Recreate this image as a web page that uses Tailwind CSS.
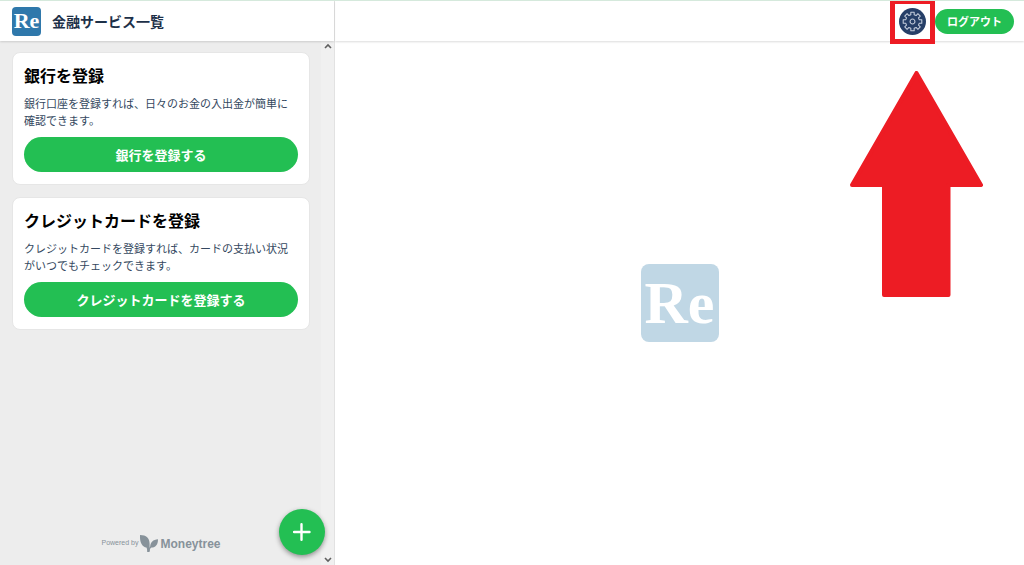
<!DOCTYPE html>
<html lang="ja">
<head>
    <meta charset="UTF-8">
    <meta name="viewport" content="width=device-width, initial-scale=1.0">
    <script src="https://cdn.jsdelivr.net/npm/@tailwindcss/browser@4"></script>
    <title>金融サービス一覧</title>
</head>
<body class="bg-white font-['Noto_Sans_CJK_JP',sans-serif] text-[#1d3048]">
    <div class="relative flex h-screen overflow-hidden border-t border-[#d5e9dc]">

        <!-- sidebar -->
        <aside class="relative flex w-[335px] shrink-0 flex-col border-r border-[#e2e2e2] bg-[#ededed]">
            <header class="z-10 flex h-10 shrink-0 items-center gap-[11px] bg-white px-3 shadow-[0_1px_2px_rgba(0,0,0,0.14)]">
                <div class="flex size-[29px] items-center justify-center rounded-[4px] bg-[#2f78ab] font-['Liberation_Serif',serif] text-[22px] leading-none font-bold text-white">Re</div>
                <h1 class="text-sm font-bold">金融サービス一覧</h1>
            </header>

            <div class="flex min-h-0 grow">
                <div class="flex grow flex-col gap-3 pt-[11px] pr-[11px] pb-[13px] pl-3">
                    <section class="rounded-lg border border-[#e6e6e6] bg-white px-[11px] pt-[10px] pb-3">
                        <h2 class="text-base leading-6 font-bold text-black">銀行を登録</h2>
                        <p class="my-2 text-[11px] leading-[17px] text-[#344860]">銀行口座を登録すれば、日々のお金の入出金が簡単に確認できます。</p>
                        <button class="h-[35px] w-full cursor-pointer rounded-full bg-[#23bf53] text-[13px] font-bold text-white">銀行を登録する</button>
                    </section>

                    <section class="rounded-lg border border-[#e6e6e6] bg-white px-[11px] pt-[10px] pb-3">
                        <h2 class="text-base leading-6 font-bold text-black">クレジットカードを登録</h2>
                        <p class="my-2 text-[11px] leading-[17px] text-[#344860]">クレジットカードを登録すれば、カードの支払い状況がいつでもチェックできます。</p>
                        <button class="h-[35px] w-full cursor-pointer rounded-full bg-[#23bf53] text-[13px] font-bold text-white">クレジットカードを登録する</button>
                    </section>

                    <footer class="mt-auto flex items-center justify-center gap-0.5 font-['Liberation_Sans',sans-serif] text-[#87929a]">
                        <span class="text-[7px]">Powered by</span>
                        <svg class="h-[17px] w-[18px]" viewBox="0 0 18 17" fill="currentColor" aria-hidden="true">
                            <path d="M0 0C6.500 0 9.800 3.500 9.600 9V17H7.200C7.200 15 7 13.600 6.400 12.600C2 11.500 -.4 7 0 0Z"/>
                            <path d="M18 4.200C18 9.600 15.800 12.300 11.600 12.600C10.200 13.300 9.600 14.500 9.600 16H8.800C8.800 14 9.200 12.600 10.200 11.600C10.400 7.200 13 4.600 18 4.200Z"/>
                        </svg>
                        <span class="text-xs font-bold">Moneytree</span>
                    </footer>
                </div>

                <!-- scroll arrows -->
                <div class="flex w-[13px] shrink-0 flex-col items-center justify-between bg-[#f0f0f0] py-px text-[#606060]">
                    <svg class="h-2 w-2" viewBox="0 0 8 8" fill="none" stroke="currentColor" stroke-width="1.600"><path d="M1 6L4 3L7 6"/></svg>
                    <svg class="h-2 w-2" viewBox="0 0 8 8" fill="none" stroke="currentColor" stroke-width="1.600"><path d="M1 2L4 5L7 2"/></svg>
                </div>
            </div>

            <button aria-label="追加" class="absolute right-[9px] bottom-[10px] flex size-[46px] cursor-pointer items-center justify-center rounded-full bg-[#23bf53] text-white shadow-[0_2px_5px_rgba(0,0,0,0.4)]">
                <svg class="size-[18px]" viewBox="0 0 18 18" fill="none" stroke="currentColor" stroke-width="2.400" stroke-linecap="round"><path d="M8.500 1.200V16.800M1 9H16.500"/></svg>
            </button>
        </aside>

        <!-- content -->
        <div class="flex grow flex-col">
            <header class="flex h-10 shrink-0 items-center justify-end gap-[9px] pr-[10px] shadow-[0_1px_2px_rgba(0,0,0,0.14)]">
                <div class="relative">
                    <button aria-label="設定" class="flex size-[27px] cursor-pointer items-center justify-center rounded-full bg-[#263f68] text-[#c5cedd]">
                        <svg class="size-[21px]" viewBox="-12 -12 24 24" fill="none" stroke="currentColor" stroke-width="1.200" stroke-linejoin="round">
                            <path id="gear"/>
                            <circle r="2.800"/>
                        </svg>
                    </button>
                    <div class="pointer-events-none absolute -inset-[9px] border-[5px] border-[#ed1c24]"></div>
                </div>
                <button class="h-[25px] cursor-pointer rounded-full bg-[#23bf53] px-3 text-[11px] font-bold text-white">ログアウト</button>
            </header>

            <main class="flex grow items-center justify-center">
                <div class="flex size-[78px] items-center justify-center rounded-lg bg-[#c0d7e5] font-['Liberation_Serif',serif] text-[60px] leading-none font-bold text-white">Re</div>
            </main>
        </div>

        <!-- arrow pointing at the settings button -->
        <svg class="pointer-events-none absolute top-[70px] right-[41px] h-[227px] w-[133px]" viewBox="0 0 133 227" fill="#ed1c24" stroke="#ed1c24" stroke-width="4" stroke-linejoin="round">
            <path d="M66.500 2L131 114H98.500V224H34V114H2Z"/>
        </svg>
    </div>

    <script>
        // eight-toothed gear outline
        const teeth = 8;
        const points = [];
        for (let i = 0; i < teeth; i++) {
            [[-0.24, 8], [-0.18, 10.8], [0.18, 10.8], [0.24, 8]].forEach(([offset, r]) => {
                const a = i * 2 * Math.PI / teeth + offset;
                points.push((r * Math.sin(a)).toFixed(2) + ' ' + (-r * Math.cos(a)).toFixed(2));
            });
        }
        document.getElementById('gear').setAttribute('d', 'M' + points.join('L') + 'Z');
    </script>
</body>
</html>
